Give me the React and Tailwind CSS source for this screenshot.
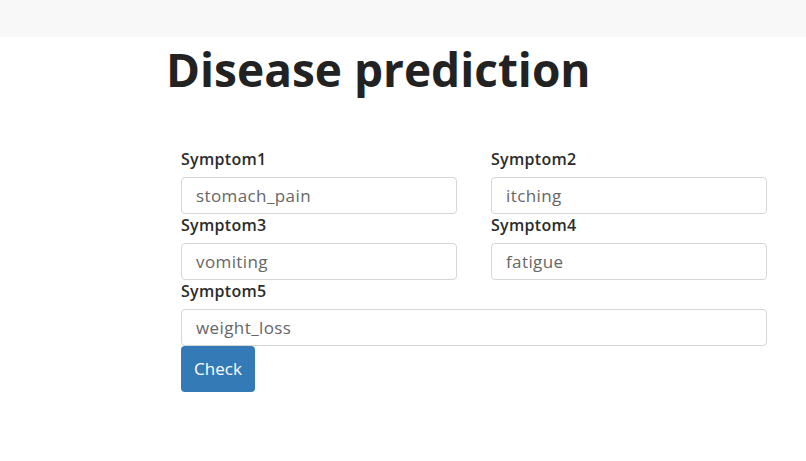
const FONT = "font-['Open_Sans',sans-serif]";

const fields = [
  { label: "Symptom1", value: "stomach_pain" },
  { label: "Symptom2", value: "itching" },
  { label: "Symptom3", value: "vomiting" },
  { label: "Symptom4", value: "fatigue" },
];

function Field({ label, value, wide }) {
  return (
    <div className={wide ? "col-span-2" : ""}>
      <label className="block text-[16px] leading-[22px] font-semibold tracking-[0.3px] text-[#2b2b2b] mb-[7px]">
        {label}
      </label>
      <input
        readOnly
        value={value}
        className="block w-full h-[37px] px-[14px] text-[17px] tracking-[0.4px] text-[#666] bg-white border border-[#d6d6d6] rounded-[4px] outline-none"
      />
    </div>
  );
}

export default function App() {
  return (
    <div className={`min-h-[461px] bg-white ${FONT}`}>
      <div className="h-[37px] bg-[#f8f8f8]" />
      <h1 className="ml-[166px] mt-[4px] text-[46px] leading-[56px] font-bold text-[#222]">
        Disease prediction
      </h1>
      <form className="ml-[181px] w-[586px] mt-[51px] grid grid-cols-2 gap-x-[34px]">
        {fields.map((f) => (
          <Field key={f.label} {...f} />
        ))}
        <Field label="Symptom5" value="weight_loss" wide />
        <div className="col-span-2">
          <button
            type="button"
            className="w-[74px] h-[46px] bg-[#337ab7] text-white text-[17px] rounded-[4px]"
          >
            Check
          </button>
        </div>
      </form>
    </div>
  );
}
